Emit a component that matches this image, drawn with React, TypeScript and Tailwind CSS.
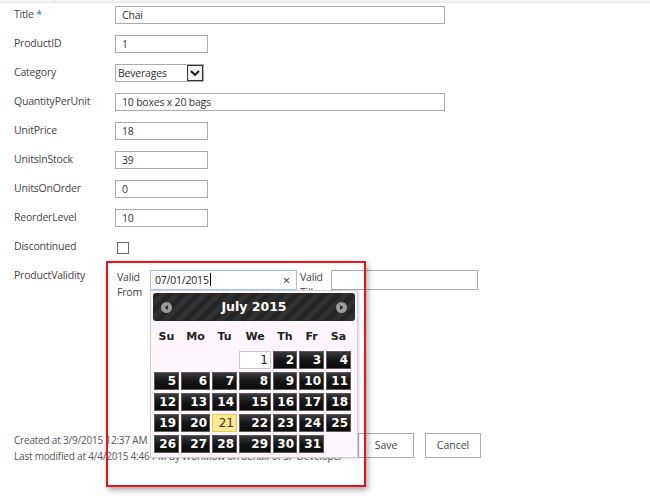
import type { ReactNode } from "react";

const font = "font-['Open_Sans','Liberation_Sans',sans-serif]";
const txt = "text-[10.5px] tracking-[-0.2px]";

const Row = ({ label, children }: { label: ReactNode; children?: ReactNode }) => (
  <div className="flex h-[29px] items-start">
    <div className={`w-[115px] shrink-0 pl-[14px] pt-[1px] ${txt} leading-[16px] text-[#444]`}>
      {label}
    </div>
    {children}
  </div>
);

const TextBox = ({ value, wide }: { value: string; wide?: boolean }) => (
  <div
    className={`mt-[1px] h-[18px] border border-[#ababab] bg-white px-[6px] ${txt} leading-[16px] text-[#333] ${
      wide ? "w-[330px]" : "w-[93px]"
    }`}
  >
    {value}
  </div>
);

const cols = ["Su", "Mo", "Tu", "We", "Th", "Fr", "Sa"];
const days: (number | null)[] = [
  null, null, null, 1, 2, 3, 4,
  5, 6, 7, 8, 9, 10, 11,
  12, 13, 14, 15, 16, 17, 18,
  19, 20, 21, 22, 23, 24, 25,
  26, 27, 28, 29, 30, 31, null,
];

const Arrow = ({ dir }: { dir: "l" | "r" }) => (
  <svg width="11" height="11" viewBox="0 0 11 11">
    <circle cx="5.5" cy="5.5" r="5.5" fill="#9a9a9a" />
    {dir === "l" ? (
      <path d="M6.8 3 L3.8 5.5 L6.8 8 Z" fill="#222" />
    ) : (
      <path d="M4.2 3 L7.2 5.5 L4.2 8 Z" fill="#222" />
    )}
  </svg>
);

const Calendar = () => (
  <div className="absolute left-0 top-[20px] z-10 w-[208px] border border-[#d0d0d0] bg-[#fdf6fd] p-[2px] pb-[4px] shadow-[1px_1px_2px_rgba(0,0,0,0.15)]">
    <div className="flex h-[28px] items-center justify-between rounded-[3px] bg-[repeating-linear-gradient(135deg,#252525_0px,#252525_5px,#303030_5px,#303030_10px)] px-[8px]">
      <Arrow dir="l" />
      <span className="font-['DejaVu_Sans',Verdana,sans-serif] text-[12.5px] font-bold text-white">
        July 2015
      </span>
      <Arrow dir="r" />
    </div>
    <div className="mt-[3px] grid grid-cols-[25px_29px_25px_32px_24px_25px_25px] gap-x-[2px] gap-y-[3px] px-[1px]">
      {cols.map((c) => (
        <div
          key={c}
          className="h-[24px] pt-[6px] text-center font-['DejaVu_Sans',Verdana,sans-serif] text-[11px] font-bold leading-[14px] text-[#222]"
        >
          {c}
        </div>
      ))}
      {days.map((d, i) => {
        if (d === null) return <div key={i} className="h-[18px]" />;
        const base =
          "h-[18px] pr-[2px] text-right font-['DejaVu_Sans',Verdana,sans-serif] text-[12px] font-bold leading-[17px]";
        if (d === 1)
          return (
            <div key={i} className={`${base} border border-[#c8c8c8] bg-white font-normal text-[#222]`}>
              {d}
            </div>
          );
        if (d === 21)
          return (
            <div key={i} className={`${base} border border-[#e8c85a] bg-[#fde98f] font-normal text-[#333]`}>
              {d}
            </div>
          );
        return (
          <div
            key={i}
            className={`${base} border border-[#5a5a5a] bg-[linear-gradient(#3a3a3a,#151515_50%,#0c0c0c)] text-white`}
          >
            {d}
          </div>
        );
      })}
    </div>
  </div>
);

export default function App() {
  return (
    <div className={`relative h-[496px] w-[650px] overflow-hidden bg-white ${font}`}>
      <div className="flex h-[3px] border-b border-[#e6e6e6] bg-[#f4f4f4]">
        <div className="w-[55px] border-r border-[#ddd]" />
        <div className="w-[58px] border-r border-[#ddd]" />
      </div>
      <div className="pt-[2px]">
        <Row
          label={
            <>
              Title <span className="text-[#2a6ed0]">*</span>
            </>
          }
        >
          <TextBox value="Chai" wide />
        </Row>
        <Row label="ProductID">
          <TextBox value="1" />
        </Row>
        <Row label="Category">
          <div className={`mt-[1px] flex h-[18px] w-[89px] border border-[#ababab] bg-white ${txt} leading-[16px] text-[#333]`}>
            <div className="flex-1 px-[2px]">Beverages</div>
            <div className="flex w-[16px] items-center justify-center border border-[#333] bg-[#f0f0f0]">
              <svg width="10" height="8" viewBox="0 0 10 8">
                <path d="M1 2 L5 6 L9 2" fill="none" stroke="#111" strokeWidth="1.8" />
              </svg>
            </div>
          </div>
        </Row>
        <Row label="QuantityPerUnit">
          <TextBox value="10 boxes x 20 bags" wide />
        </Row>
        <Row label="UnitPrice">
          <TextBox value="18" />
        </Row>
        <Row label="UnitsInStock">
          <TextBox value="39" />
        </Row>
        <Row label="UnitsOnOrder">
          <TextBox value="0" />
        </Row>
        <Row label="ReorderLevel">
          <TextBox value="10" />
        </Row>
        <Row label="Discontinued">
          <div className="ml-[2px] mt-[5px] h-[12px] w-[12px] border border-[#666] bg-white" />
        </Row>
        <Row label="ProductValidity">
          <div className="ml-[2px] flex pt-[4px]">
            <div className={`w-[33px] ${txt} leading-[15px] text-[#444]`}>
              Valid
              <br />
              From
            </div>
            <div className="relative">
              <div className={`flex h-[20px] w-[147px] items-center justify-between border border-[#a6c8e8] bg-white pl-[4px] pr-[6px] ${txt} text-[#222]`}>
                <span>
                  07/01/2015<span className="ml-[1px] inline-block h-[13px] w-px translate-y-[2px] bg-black" />
                </span>
                <span className="text-[13px] leading-none text-[#333]">×</span>
              </div>
              <Calendar />
            </div>
            <div className={`ml-[3px] h-[20px] w-[31px] overflow-hidden ${txt} leading-[15px] text-[#444]`}>
              Valid
              <br />
              Till
            </div>
            <div className="h-[20px] w-[147px] border border-[#ababab] bg-white" />
          </div>
        </Row>
      </div>

      <div className="mt-[137px] flex items-start">
        <div className="w-[358px] pl-[14px] text-[10px] leading-[16px] tracking-[-0.2px] text-[#555]">
          <div className="whitespace-nowrap">Created at 3/9/2015 12:37 AM &nbsp;by Workflow on behalf of</div>
          <div className="whitespace-nowrap">Last modified at 4/4/2015 4:46 PM by Workflow on behalf of SP Developer</div>
        </div>
        <div className="flex gap-[11px] pt-[1px]">
          <div className="flex h-[25px] w-[56px] items-center justify-center border border-[#ababab] bg-white text-[10.5px] text-[#444]">
            Save
          </div>
          <div className="flex h-[25px] w-[56px] items-center justify-center border border-[#ababab] bg-white text-[10.5px] text-[#444]">
            Cancel
          </div>
        </div>
      </div>

      <div className="pointer-events-none absolute left-[106px] top-[261px] z-20 h-[226px] w-[260px] border-2 border-[#e8141c] shadow-[2px_3px_6px_rgba(0,0,0,0.35)]" />
    </div>
  );
}
